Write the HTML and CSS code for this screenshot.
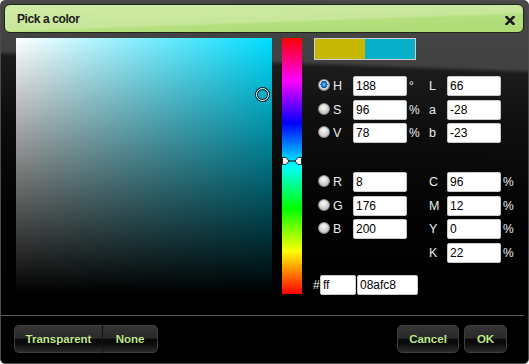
FILE: index.html
```html
<!DOCTYPE html>
<html>
<head>
<meta charset="utf-8">
<link rel="stylesheet" href="styles.css">
</head>
<body>
<div class="window">
  <div class="titlebar">
    <span class="title">Pick a color</span>
    <svg class="close" width="10" height="9" viewBox="0 0 10 9"><path d="M1.5 1 L8.5 8 M8.5 1 L1.5 8" stroke="#1c1c1c" stroke-width="2.6" stroke-linecap="square"/></svg>
  </div>
  <div class="content">
    <div class="sv">
      <div class="sv-white"></div>
      <div class="sv-black"></div>
      <div class="sv-cursor" style="left:246px;top:56px"></div>
    </div>
    <div class="hue">
      <svg class="hue-marker" style="top:119px" width="20" height="8" viewBox="0 0 20 8">
        <path d="M6 4 H14" stroke="#000" stroke-width="1"/>
        <path d="M0.5 0.5 H4 L7 4 L4 7.5 H0.5 Z" fill="#fff" stroke="#222" stroke-width="1"/>
        <path d="M19.5 0.5 H16 L13 4 L16 7.5 H19.5 Z" fill="#fff" stroke="#222" stroke-width="1"/>
      </svg>
    </div>
    <div class="panel">
      <div class="swatch"><div class="old"></div><div class="new"></div></div>
      <div class="fields hsv">
        <span class="radio checked"></span><span class="lbl">H</span><input class="field" value="188"><span class="unit">°</span><span class="lbl">L</span><input class="field" value="66"><span></span>
        <span class="radio"></span><span class="lbl">S</span><input class="field" value="96"><span class="unit">%</span><span class="lbl">a</span><input class="field" value="-28"><span></span>
        <span class="radio"></span><span class="lbl">V</span><input class="field" value="78"><span class="unit">%</span><span class="lbl">b</span><input class="field" value="-23"><span></span>
      </div>
      <div class="fields rgb">
        <span class="radio"></span><span class="lbl">R</span><input class="field" value="8"><span></span><span class="lbl">C</span><input class="field" value="96"><span class="unit">%</span>
        <span class="radio"></span><span class="lbl">G</span><input class="field" value="176"><span></span><span class="lbl">M</span><input class="field" value="12"><span class="unit">%</span>
        <span class="radio"></span><span class="lbl">B</span><input class="field" value="200"><span></span><span class="lbl">Y</span><input class="field" value="0"><span class="unit">%</span>
        <span></span><span></span><span></span><span></span><span class="lbl">K</span><input class="field" value="22"><span class="unit">%</span>
      </div>
      <div class="hex">
        <span class="hash">#</span><input class="field alpha" value="ff"><input class="field hexval" value="08afc8">
      </div>
    </div>
  </div>
  <div class="footer">
    <div class="group">
      <button class="btn first">Transparent</button><button class="btn last">None</button>
    </div>
    <div class="actions">
      <button class="btn single cancel">Cancel</button>
      <button class="btn single ok">OK</button>
    </div>
  </div>
</div>
</body>
</html>
```

FILE: styles.css
```css
* { box-sizing: border-box; }
html, body { margin: 0; padding: 0; background: #ffffff; }
body { width: 529px; height: 364px; overflow: hidden; font-family: "Liberation Sans", Arial, sans-serif; }

.window {
  width: 529px;
  height: 364px;
  border: 1px solid #4c4c4c;
  border-radius: 5px;
  background: linear-gradient(182deg, #484848 0, #414141 68px, #1c1c1c 73px, #0e0e0e 130px, #030303 220px, #000 300px);
  display: flex;
  flex-direction: column;
  overflow: hidden;
}

.titlebar {
  margin: 3px 4px 0 3px;
  height: 29px;
  border: 1px solid #1d2614;
  border-radius: 6px;
  background: linear-gradient(178deg, #d0eba6 0, #c8e79b 55%, #b4df7d 62%, #aedb74 100%);
  display: flex;
  align-items: center;
  justify-content: space-between;
  padding: 0 8px 0 12px;
}
.title {
  font-weight: bold;
  font-size: 12px;
  letter-spacing: -0.4px;
  color: #1b1b1b;
  margin-top: 1px;
}
.close { display: block; margin-top: 3px; }

.content {
  display: flex;
  align-items: flex-start;
  padding: 5px 0 0 15px;
  height: 282px;
}

.sv {
  position: relative;
  width: 256px;
  height: 256px;
  background: #00ddff;
  flex: none;
}
.sv-white, .sv-black { position: absolute; inset: 0; }
.sv-white { background: linear-gradient(to right, #fff, rgba(255,255,255,0)); }
.sv-black { background: linear-gradient(to bottom, rgba(0,0,0,0), #000); }
.sv-cursor {
  position: absolute;
  width: 13px;
  height: 13px;
  margin: -6.5px 0 0 -6.5px;
  border-radius: 50%;
  border: 1px solid #e6e6e6;
  box-shadow: 0 0 0 1px #111, inset 0 0 0 1px #111;
}

.hue {
  position: relative;
  margin-left: 10px;
  width: 20px;
  height: 256px;
  flex: none;
  background: linear-gradient(to bottom, #ff0000 0%, #ff00ff 16.67%, #0000ff 33.33%, #00ffff 50%, #00ff00 66.67%, #ffff00 83.33%, #ff0000 100%);
}
.hue-marker { position: absolute; left: 0; display: block; }

.panel {
  margin-left: 12px;
  display: flex;
  flex-direction: column;
}
.swatch {
  width: 102px;
  height: 22px;
  border: 1px solid #cfcfcf;
  display: flex;
}
.swatch .old { flex: 1; background: #c8b806; }
.swatch .new { flex: 1; background: #08afc8; }

.fields {
  display: grid;
  grid-template-columns: 18px 21px 54px 21px 19px 54px 20px;
  grid-auto-rows: 20px;
  row-gap: 3.5px;
  align-items: center;
  color: #ececec;
  font-size: 12px;
}
.hsv { margin-top: 16px; }
.rgb { margin-top: 29px; }

.lbl { padding-left: 1px; font-size: 12.5px; }
.unit { padding-left: 2px; font-size: 12px; }

.field {
  width: 54px;
  height: 20px;
  margin: 0;
  border: 1px solid #c9c9c9;
  border-radius: 2px;
  background: #fff;
  padding: 0 2px;
  font-family: "Liberation Sans", Arial, sans-serif;
  font-size: 12px;
  color: #000;
  outline: none;
}

.radio {
  display: block;
  width: 12px;
  height: 12px;
  margin-left: 4px;
  margin-top: -2px;
  border-radius: 50%;
  border: 1px solid #8a8a8a;
  background: radial-gradient(circle at 45% 35%, #fafafa 0, #d8d8d8 45%, #a9a9a9 100%);
}
.radio.checked {
  background:
    radial-gradient(circle at 50% 45%, #9fd6ff 0, #2d8fd6 1.5px, #0b5596 3.5px, rgba(11,85,150,0) 3.6px),
    radial-gradient(circle at 45% 35%, #ffffff 0, #e0e0e0 50%, #a0a0a0 100%);
}

.hex {
  display: flex;
  align-items: center;
  margin-top: 12.5px;
  color: #ececec;
  font-size: 12px;
}
.hash { width: 6px; margin-left: -1px; }
.alpha { width: 36px; margin-left: 1px; }
.hexval { width: 61px; margin-left: 1px; }

.footer {
  margin-right: 4px;
  border-top: 1px solid #5a5a5a;
  flex: 1;
  display: flex;
  justify-content: space-between;
  align-items: flex-start;
  padding: 9px 17px 0 13px;
}
.group { display: flex; }
.actions { display: flex; gap: 5px; }

.btn {
  height: 28px;
  margin: 0;
  border: 1px solid #3d3d3d;
  background: linear-gradient(to bottom, #353535 0, #2a2a2a 46%, #090909 52%, #0d0d0d 70%, #2b2b2b 100%);
  color: #bfe98a;
  font-family: "Liberation Sans", Arial, sans-serif;
  font-weight: bold;
  font-size: 11.5px;
  text-shadow: 0 1px 0 #000;
  padding: 0;
  cursor: default;
}
.btn.first { width: 89px; border-radius: 5px 0 0 5px; border-right: 1px solid #111; }
.btn.last { width: 55px; border-radius: 0 5px 5px 0; border-left: 0; }
.btn.single { border-radius: 5px; }
.cancel { width: 62px; }
.ok { width: 43px; }
```
